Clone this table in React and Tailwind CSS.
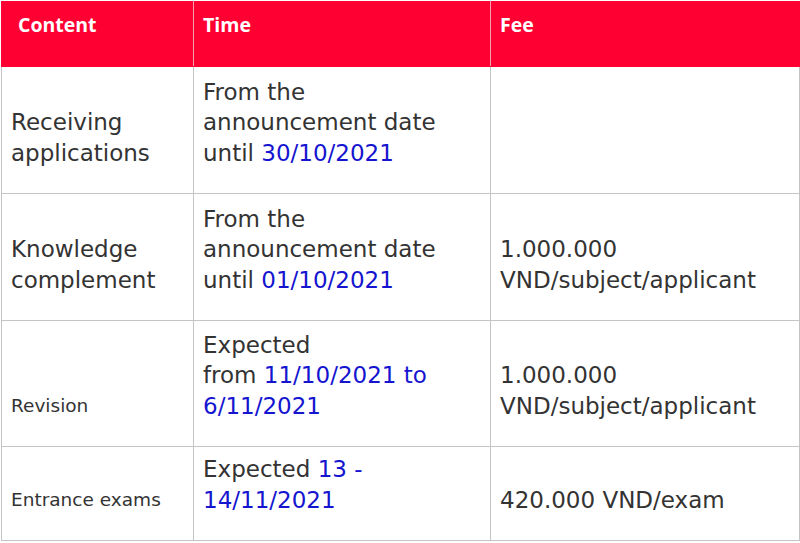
const rows = [
  {
    content: "Receiving applications",
    small: false,
    time: ["From the", "announcement date", ["until ", "30/10/2021"]],
    fee: "",
    height: "h-[127px]",
  },
  {
    content: "Knowledge complement",
    small: false,
    time: ["From the", "announcement date", ["until ", "01/10/2021"]],
    fee: "1.000.000 VND/subject/applicant",
    height: "h-[127px]",
  },
  {
    content: "Revision",
    small: true,
    time: ["Expected", ["from ", "11/10/2021 to"], ["", "6/11/2021"]],
    fee: "1.000.000 VND/subject/applicant",
    height: "h-[126px]",
  },
  {
    content: "Entrance exams",
    small: true,
    time: [["Expected ", "13 -"], ["", "14/11/2021"]],
    fee: "420.000 VND/exam",
    height: "h-[94px]",
  },
];

function Cell({ children, className = "" }) {
  return (
    <td className={`border border-[#c4c4c4] pl-[9px] pr-[8px] pb-[25px] align-bottom ${className}`}>
      {children}
    </td>
  );
}

export default function App() {
  return (
    <div className="h-[543px] w-[800px] bg-white pl-[1px] pt-[1px]">
      <table
        className="w-[798px] table-fixed border-collapse text-[23px] leading-[30.5px] text-[#333333]"
        style={{ fontFamily: '"DejaVu Sans", Verdana, sans-serif' }}
      >
        <colgroup>
          <col className="w-[192px]" />
          <col className="w-[297px]" />
          <col className="w-[309px]" />
        </colgroup>
        <thead>
          <tr className="h-[65px] bg-[#ff0033] font-['Open_Sans',sans-serif] text-[19.5px] font-bold text-white">
            <th className="border border-[#ff0033] border-r-[#f4a0b0] px-[16px] pb-[18px] text-left align-middle">
              Content
            </th>
            <th className="border border-[#ff0033] border-r-[#f4a0b0] px-[9px] pb-[18px] text-left align-middle">
              Time
            </th>
            <th className="border border-[#ff0033] px-[9px] pb-[18px] text-left align-middle">Fee</th>
          </tr>
        </thead>
        <tbody>
          {rows.map((row) => (
            <tr key={row.content} className={row.height}>
              <Cell className={row.small ? "text-[18.5px]" : ""}>{row.content}</Cell>
              <Cell>
                {row.time.map((line, i) =>
                  typeof line === "string" ? (
                    <div key={i}>{line}</div>
                  ) : (
                    <div key={i}>
                      {line[0]}
                      <span className="text-[#1515d0]">{line[1]}</span>
                    </div>
                  )
                )}
              </Cell>
              <Cell>{row.fee}</Cell>
            </tr>
          ))}
        </tbody>
      </table>
    </div>
  );
}
